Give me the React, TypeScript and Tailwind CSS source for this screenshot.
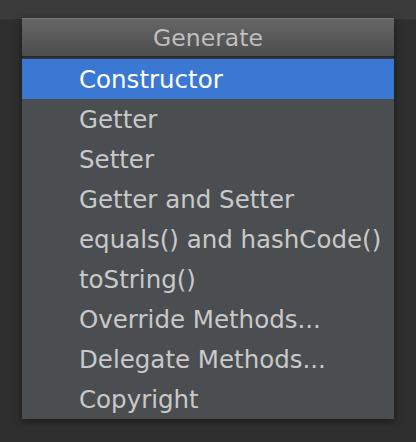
const items = [
  "Constructor",
  "Getter",
  "Setter",
  "Getter and Setter",
  "equals() and hashCode()",
  "toString()",
  "Override Methods...",
  "Delegate Methods...",
  "Copyright",
];

export default function App() {
  return (
    <div className="w-[416px] h-[442px] bg-[#2f2f2f] overflow-hidden" style={{ fontFamily: '"DejaVu Sans", sans-serif' }}>
      <div className="h-[19px] bg-[#3b3b3b]" />
      <div className="ml-[22px] -mt-px w-[372px] bg-[#4b4e51] shadow-[0_2px_8px_rgba(0,0,0,0.5)]">
        <div className="h-[38px] border-t border-[#7a7a7a] bg-gradient-to-b from-[#666666] to-[#4d4d4d] flex items-center justify-center pt-[2px] text-[23.5px] text-[#bfbfbf]">
          Generate
        </div>
        <div className="h-[3px] bg-[#2b2b2b] border-b border-[#3e3e3e]" />
        <ul>
          {items.map((it, i) => (
            <li
              key={it}
              className={
                i === 0
                  ? "h-[40px] flex items-center pl-[57px] pt-[2px] text-[24.5px] bg-[#3b78d3] text-white"
                  : "h-[40px] flex items-center pl-[57px] pt-[2px] text-[24.5px] text-[#c9c9c9]"
              }
            >
              {it}
            </li>
          ))}
        </ul>
      </div>
    </div>
  );
}
